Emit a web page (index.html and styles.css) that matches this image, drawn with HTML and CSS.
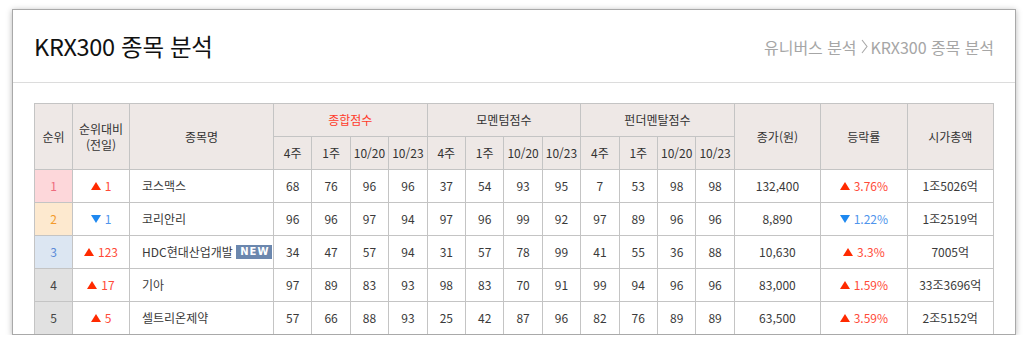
FILE: index.html
```html
<!DOCTYPE html>
<html lang="ko">
<head>
<meta charset="utf-8">
<title>KRX300 종목 분석</title>
<link rel="stylesheet" href="styles.css">
</head>
<body>
<div class="panel">
  <div class="panel-head">
    <h1 class="title">KRX300 종목 분석</h1>
    <div class="crumb">유니버스 분석<svg class="sep" width="7" height="15" viewBox="0 0 7 15"><path d="M1 1 L6 7.5 L1 14" fill="none" stroke="#a8a8a8" stroke-width="1.1"/></svg>KRX300 종목 분석</div>
  </div>
  <div class="panel-body">
    <table class="grid">
      <colgroup>
        <col class="c-rank"><col class="c-chg"><col class="c-name">
        <col class="c-s"><col class="c-s"><col class="c-s"><col class="c-s">
        <col class="c-s"><col class="c-s"><col class="c-s"><col class="c-s">
        <col class="c-s"><col class="c-s"><col class="c-s"><col class="c-s">
        <col class="c-w"><col class="c-w"><col class="c-w">
      </colgroup>
      <thead>
        <tr>
          <th rowspan="2">순위</th>
          <th rowspan="2">순위대비<br>(전일)</th>
          <th rowspan="2">종목명</th>
          <th colspan="4" class="hl">종합점수</th>
          <th colspan="4">모멘텀점수</th>
          <th colspan="4">펀더멘탈점수</th>
          <th rowspan="2">종가(원)</th>
          <th rowspan="2">등락률</th>
          <th rowspan="2">시가총액</th>
        </tr>
        <tr>
          <th class="g1">4주</th><th class="d">1주</th><th class="d">10/20</th><th class="d">10/23</th>
          <th class="g1">4주</th><th class="d">1주</th><th class="d">10/20</th><th class="d">10/23</th>
          <th class="g1">4주</th><th class="d">1주</th><th class="d">10/20</th><th class="d">10/23</th>
        </tr>
      </thead>
      <tbody>
        <tr>
          <td class="rank r1">1</td>
          <td><span class="up"><i class="tri-up"></i>1</span></td>
          <td class="name">코스맥스</td>
          <td class="g1">68</td><td class="d">76</td><td class="d">96</td><td class="d">96</td>
          <td class="g1">37</td><td class="d">54</td><td class="d">93</td><td class="d">95</td>
          <td class="g1">7</td><td class="d">53</td><td class="d">98</td><td class="d">98</td>
          <td>132,400</td>
          <td><span class="up"><i class="tri-up"></i>3.76%</span></td>
          <td>1조5026억</td>
        </tr>
        <tr>
          <td class="rank r2">2</td>
          <td><span class="down"><i class="tri-down"></i>1</span></td>
          <td class="name">코리안리</td>
          <td class="g1">96</td><td class="d">96</td><td class="d">97</td><td class="d">94</td>
          <td class="g1">97</td><td class="d">96</td><td class="d">99</td><td class="d">92</td>
          <td class="g1">97</td><td class="d">89</td><td class="d">96</td><td class="d">96</td>
          <td>8,890</td>
          <td><span class="down"><i class="tri-down"></i>1.22%</span></td>
          <td>1조2519억</td>
        </tr>
        <tr>
          <td class="rank r3">3</td>
          <td><span class="up"><i class="tri-up"></i>123</span></td>
          <td class="name">HDC현대산업개발 <span class="badge">NEW</span></td>
          <td class="g1">34</td><td class="d">47</td><td class="d">57</td><td class="d">94</td>
          <td class="g1">31</td><td class="d">57</td><td class="d">78</td><td class="d">99</td>
          <td class="g1">41</td><td class="d">55</td><td class="d">36</td><td class="d">88</td>
          <td>10,630</td>
          <td><span class="up"><i class="tri-up"></i>3.3%</span></td>
          <td>7005억</td>
        </tr>
        <tr>
          <td class="rank r4">4</td>
          <td><span class="up"><i class="tri-up"></i>17</span></td>
          <td class="name">기아</td>
          <td class="g1">97</td><td class="d">89</td><td class="d">83</td><td class="d">93</td>
          <td class="g1">98</td><td class="d">83</td><td class="d">70</td><td class="d">91</td>
          <td class="g1">99</td><td class="d">94</td><td class="d">96</td><td class="d">96</td>
          <td>83,000</td>
          <td><span class="up"><i class="tri-up"></i>1.59%</span></td>
          <td>33조3696억</td>
        </tr>
        <tr>
          <td class="rank r4">5</td>
          <td><span class="up"><i class="tri-up"></i>5</span></td>
          <td class="name">셀트리온제약</td>
          <td class="g1">57</td><td class="d">66</td><td class="d">88</td><td class="d">93</td>
          <td class="g1">25</td><td class="d">42</td><td class="d">87</td><td class="d">96</td>
          <td class="g1">82</td><td class="d">76</td><td class="d">89</td><td class="d">89</td>
          <td>63,500</td>
          <td><span class="up"><i class="tri-up"></i>3.59%</span></td>
          <td>2조5152억</td>
        </tr>
      </tbody>
    </table>
  </div>
</div>
</body>
</html>
```
FILE: styles.css
```css
* { box-sizing: border-box; }
html, body { margin: 0; padding: 0; background: #ffffff; }
body {
  font-family: "Noto Sans CJK KR", "Noto Sans", sans-serif;
  color: #333;
  padding: 9px 12px 0 12px;
}
.panel {
  width: 1004px;
  height: 326px;
  border: 1px solid #a9a9a9;
  background: #fff;
  box-shadow: 0 1px 6px rgba(0,0,0,0.28);
  overflow: hidden;
}
.panel-head {
  height: 73px;
  border-bottom: 1px solid #dcdcdc;
  display: flex;
  align-items: center;
  justify-content: space-between;
  padding: 0 21px 0 21px;
}
.title {
  margin: 0;
  font-size: 23.5px;
  font-weight: 400;
  color: #111;
  letter-spacing: -0.3px;
  line-height: 1;
  padding-top: 2px;
}
.crumb {
  display: flex;
  align-items: center;
  font-size: 16px;
  color: #a6a6a6;
  letter-spacing: -0.05px;
  padding-top: 1px;
}
.crumb .sep { margin: 0 3px 0 4px; }
.panel-body { padding: 20px 21px 0 21px; }
.grid {
  border-collapse: collapse;
  table-layout: fixed;
  width: 959px;
  font-size: 12px;
}
.c-rank { width: 38px; }
.c-chg { width: 57px; }
.c-name { width: 144px; }
.c-s { width: 38.4px; }
.c-w { width: 86.4px; }
th, td {
  border: 1px solid #c4c4c4;
  height: 33px;
  padding: 0;
  text-align: center;
  vertical-align: middle;
  white-space: nowrap;
  line-height: 16px;
}
th {
  background: #eee8e6;
  font-weight: 400;
  color: #333;
}
th.hl { color: #ff3b2a; }
th.d, td.d { border-left: 1px dashed #c4c4c4; }
td { color: #3a3a3a; }
td.name { text-align: left; padding-left: 12px; }
.rank.r1 { background: #fdd7da; color: #ee6b7d; }
.rank.r2 { background: #fde9cf; color: #f39a2c; }
.rank.r3 { background: #dce6f2; color: #5a8ad8; }
.rank.r4 { background: #e1e1e1; color: #444; }
.up { color: #ff4a38; }
.down { color: #4f94ec; }
.tri-up, .tri-down {
  display: inline-block;
  width: 0; height: 0;
  border-left: 5px solid transparent;
  border-right: 5px solid transparent;
  margin-right: 4px;
  vertical-align: 1px;
}
.tri-up { border-bottom: 8px solid #ff2a00; }
.tri-down { border-top: 8px solid #1e88f0; }
.badge {
  display: inline-block;
  background: #6b87ae;
  color: #fff;
  font-family: "DejaVu Sans", sans-serif;
  font-weight: 700;
  font-size: 10px;
  letter-spacing: 1px;
  line-height: 14px;
  padding: 0 3px 0 4px;
  margin-left: 0;
  vertical-align: 2px;
}
```
